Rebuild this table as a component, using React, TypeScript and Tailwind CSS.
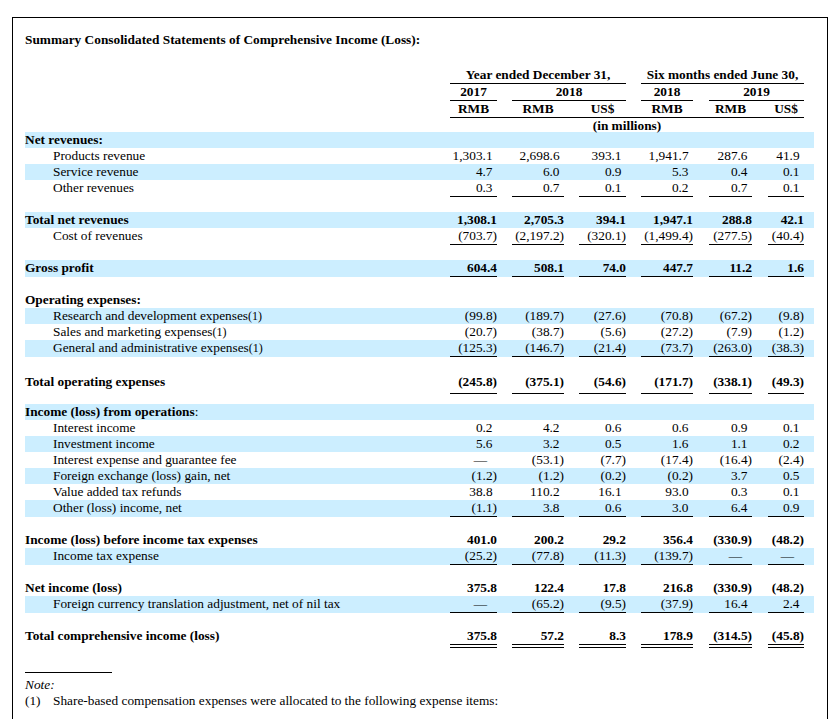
type Line = "single" | "double";

type Row =
  | { spacer: string }
  | {
      label: string;
      indent?: boolean;
      bold?: boolean;
      boldNums?: boolean;
      blue?: boolean;
      sup?: boolean;
      plainColon?: boolean;
      vals?: string[];
      line?: Line;
      tall?: boolean;
    };

const grid =
  "grid grid-cols-[425px_47px_15px_52px_15px_47px_15px_52px_16px_43px_16px_36px_1fr]";

const colStart = [
  "col-start-2",
  "col-start-4",
  "col-start-6",
  "col-start-8",
  "col-start-10",
  "col-start-12",
];

const rows: Row[] = [
  { label: "Net revenues:", bold: true, blue: true },
  { label: "Products revenue", indent: true, vals: ["1,303.1", "2,698.6", "393.1", "1,941.7", "287.6", "41.9"] },
  { label: "Service revenue", indent: true, blue: true, vals: ["4.7", "6.0", "0.9", "5.3", "0.4", "0.1"] },
  { label: "Other revenues", indent: true, vals: ["0.3", "0.7", "0.1", "0.2", "0.7", "0.1"], line: "single" },
  { spacer: "h-[15px]" },
  { label: "Total net revenues", bold: true, boldNums: true, blue: true, vals: ["1,308.1", "2,705.3", "394.1", "1,947.1", "288.8", "42.1"] },
  { label: "Cost of revenues", indent: true, vals: ["(703.7)", "(2,197.2)", "(320.1)", "(1,499.4)", "(277.5)", "(40.4)"], line: "single" },
  { spacer: "h-[15px]" },
  { label: "Gross profit", bold: true, boldNums: true, blue: true, vals: ["604.4", "508.1", "74.0", "447.7", "11.2", "1.6"], line: "single" },
  { spacer: "h-[15px]" },
  { label: "Operating expenses:", bold: true },
  { label: "Research and development expenses", sup: true, indent: true, blue: true, vals: ["(99.8)", "(189.7)", "(27.6)", "(70.8)", "(67.2)", "(9.8)"] },
  { label: "Sales and marketing expenses", sup: true, indent: true, vals: ["(20.7)", "(38.7)", "(5.6)", "(27.2)", "(7.9)", "(1.2)"] },
  { label: "General and administrative expenses", sup: true, indent: true, blue: true, vals: ["(125.3)", "(146.7)", "(21.4)", "(73.7)", "(263.0)", "(38.3)"], line: "single" },
  { spacer: "h-[17px]" },
  { label: "Total operating expenses", bold: true, boldNums: true, tall: true, vals: ["(245.8)", "(375.1)", "(54.6)", "(171.7)", "(338.1)", "(49.3)"], line: "single" },
  { spacer: "h-[10px]" },
  { label: "Income (loss) from operations", bold: true, plainColon: true, blue: true },
  { label: "Interest income", indent: true, vals: ["0.2", "4.2", "0.6", "0.6", "0.9", "0.1"] },
  { label: "Investment income", indent: true, blue: true, vals: ["5.6", "3.2", "0.5", "1.6", "1.1", "0.2"] },
  { label: "Interest expense and guarantee fee", indent: true, vals: ["—", "(53.1)", "(7.7)", "(17.4)", "(16.4)", "(2.4)"] },
  { label: "Foreign exchange (loss) gain, net", indent: true, blue: true, vals: ["(1.2)", "(1.2)", "(0.2)", "(0.2)", "3.7", "0.5"] },
  { label: "Value added tax refunds", indent: true, vals: ["38.8", "110.2", "16.1", "93.0", "0.3", "0.1"] },
  { label: "Other (loss) income, net", indent: true, blue: true, vals: ["(1.1)", "3.8", "0.6", "3.0", "6.4", "0.9"], line: "single" },
  { spacer: "h-[15px]" },
  { label: "Income (loss) before income tax expenses", bold: true, boldNums: true, vals: ["401.0", "200.2", "29.2", "356.4", "(330.9)", "(48.2)"] },
  { label: "Income tax expense", indent: true, blue: true, vals: ["(25.2)", "(77.8)", "(11.3)", "(139.7)", "—", "—"], line: "single" },
  { spacer: "h-[15px]" },
  { label: "Net income (loss)", bold: true, boldNums: true, vals: ["375.8", "122.4", "17.8", "216.8", "(330.9)", "(48.2)"] },
  { label: "Foreign currency translation adjustment, net of nil tax", indent: true, blue: true, vals: ["—", "(65.2)", "(9.5)", "(37.9)", "16.4", "2.4"], line: "single" },
  { spacer: "h-[15px]" },
  { label: "Total comprehensive income (loss)", bold: true, boldNums: true, vals: ["375.8", "57.2", "8.3", "178.9", "(314.5)", "(45.8)"], line: "double" },
];

function Num({ v, bold, line, tall, col }: { v: string; bold?: boolean; line?: Line; tall?: boolean; col: number }) {
  const dash = v === "—";
  const neg = v.startsWith("(");
  return (
    <div className={`${colStart[col]} flex flex-col`}>
      <div
        className={`${tall ? "h-[19px]" : "h-4"} text-right leading-[16px] whitespace-nowrap ${bold ? "font-bold" : ""} ${dash ? "pr-[10px]" : ""}`}
      >
        {v}
        {!dash && !neg && !bold && <span className="invisible">)</span>}
      </div>
      {line && <div className="h-px bg-black" />}
      {line === "double" && <div className="mt-[2px] h-px bg-black" />}
    </div>
  );
}

function DataRow({ r }: { r: Row }) {
  if ("spacer" in r) return <div className={r.spacer} />;
  return (
    <div className={`${grid} items-start ${r.blue ? "bg-[#cceeff]" : ""}`}>
      <div
        className={`col-start-1 h-4 leading-[16px] whitespace-nowrap ${r.indent ? "pl-[28px]" : ""} ${r.bold ? "font-bold" : ""}`}
      >
        {r.label}
        {r.sup && <span className="text-[12px]">(1)</span>}
        {r.plainColon && <span className="font-normal">:</span>}
      </div>
      {r.vals?.map((v, i) => (
        <Num key={i} v={v} col={i} bold={r.boldNums} line={r.line} tall={r.tall} />
      ))}
    </div>
  );
}

export default function App() {
  return (
    <div className="min-h-screen bg-white pl-[12px] pt-[17px] text-[13.33px] text-black [font-family:'Liberation_Serif','Times_New_Roman',serif]">
      <div className="w-[816px] border border-black pb-10 pl-[12px] pr-[13px] pt-[14px]">
        <div className="font-bold leading-[16px]">
          Summary Consolidated Statements of Comprehensive Income (Loss):
        </div>

        {/* column header */}
        <div className="mt-[19px] font-bold leading-[16px]">
          <div className={grid}>
            <div className="col-span-5 col-start-2 text-center">
              <div>Year ended December 31,</div>
              <div className="h-px bg-black" />
            </div>
            <div className="col-span-5 col-start-8 text-center">
              <div>Six months ended June 30,</div>
              <div className="h-px bg-black" />
            </div>
          </div>
          <div className={grid}>
            <div className="col-start-2 text-center">
              <div>2017</div>
              <div className="h-px bg-black" />
            </div>
            <div className="col-span-3 col-start-4 text-center">
              <div>2018</div>
              <div className="h-px bg-black" />
            </div>
            <div className="col-start-8 text-center">
              <div>2018</div>
              <div className="h-px bg-black" />
            </div>
            <div className="col-span-3 col-start-10 text-center">
              <div>2019</div>
              <div className="h-px bg-black" />
            </div>
          </div>
          <div className={grid}>
            <div className="col-span-11 col-start-2">
              <div className="flex">
                <div className="w-[47px] text-center">RMB</div>
                <div className="ml-[15px] w-[52px] text-center">RMB</div>
                <div className="ml-[15px] w-[47px] text-center">US$</div>
                <div className="ml-[15px] w-[52px] text-center">RMB</div>
                <div className="ml-[16px] w-[43px] text-center">RMB</div>
                <div className="ml-[16px] w-[36px] text-center">US$</div>
              </div>
              <div className="h-px bg-black" />
            </div>
          </div>
          <div className={`${grid} h-[14px]`}>
            <div className="col-span-11 col-start-2 text-center leading-[15px]">(in millions)</div>
          </div>
        </div>

        <div>
          {rows.map((r, i) => (
            <DataRow key={i} r={r} />
          ))}
        </div>

        {/* note */}
        <div className="mt-[24px] h-px w-[87px] bg-black" />
        <div className="mt-[4px] italic leading-[16px]">Note:</div>
        <div className="flex leading-[16px]">
          <span className="w-[28px]">(1)</span>
          <span>Share-based compensation expenses were allocated to the following expense items:</span>
        </div>
      </div>
    </div>
  );
}
